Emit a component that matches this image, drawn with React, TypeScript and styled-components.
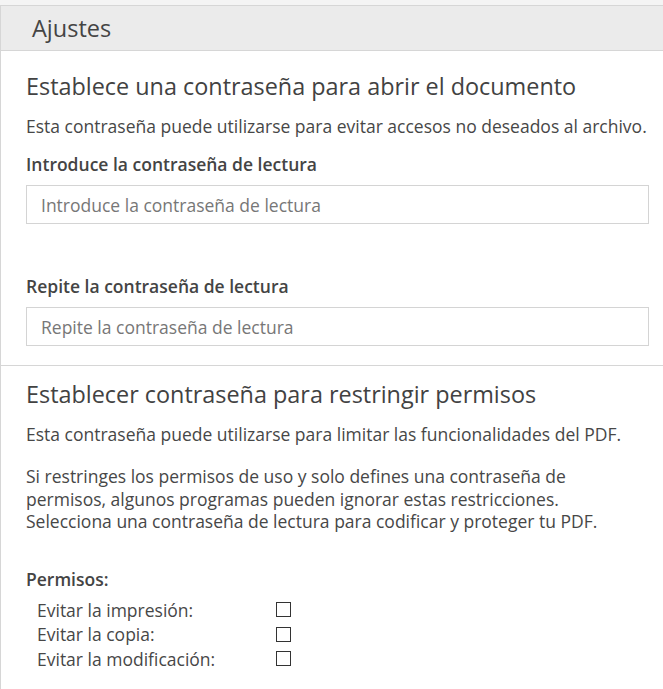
import React from "react";
import styled, { createGlobalStyle } from "styled-components";

const GlobalStyle = createGlobalStyle`
  html, body {
    margin: 0;
    padding: 0;
    background: #f4f4f4;
  }
  body {
    font-family: "Open Sans", "Noto Sans", sans-serif;
    color: #444;
  }
`;

type Permission = {
  label: string
};

const permissions: Permission[] = [
  { label: "Evitar la impresión:" },
  { label: "Evitar la copia:" },
  { label: "Evitar la modificación:" },
];

export default function App() {
  return (
    <>
      <GlobalStyle />
      <Page>
        <Panel>
          <PanelHeader>Ajustes</PanelHeader>

          <Section>
            <SectionTitle>Establece una contraseña para abrir el documento</SectionTitle>
            <Description>
              Esta contraseña puede utilizarse para evitar accesos no deseados al archivo.
            </Description>

            <Field>
              <FieldLabel>Introduce la contraseña de lectura</FieldLabel>
              <TextInput type="password" placeholder="Introduce la contraseña de lectura" />
            </Field>

            <Field spaced>
              <FieldLabel>Repite la contraseña de lectura</FieldLabel>
              <TextInput type="password" placeholder="Repite la contraseña de lectura" />
            </Field>
          </Section>

          <Section divided>
            <SectionTitle>Establecer contraseña para restringir permisos</SectionTitle>
            <Description>
              Esta contraseña puede utilizarse para limitar las funcionalidades del PDF.
            </Description>
            <Paragraph>
              Si restringes los permisos de uso y solo defines una contraseña de
              <br />
              permisos, algunos programas pueden ignorar estas restricciones.
              <br />
              Selecciona una contraseña de lectura para codificar y proteger tu PDF.
            </Paragraph>

            <PermTitle>Permisos:</PermTitle>
            <PermList>
              {permissions.map((p) => (
                <PermRow key={p.label}>
                  <PermLabel>{p.label}</PermLabel>
                  <Check />
                </PermRow>
              ))}
            </PermList>
          </Section>
        </Panel>
      </Page>
    </>
  );
}

const Page = styled.div`
  padding-top: 5px;
  width: 663px;
  height: 689px;
  box-sizing: border-box;
  overflow: hidden;
`;

const Panel = styled.div`
  background: #fff;
  border-left: 1px solid #d6d6d6;
  border-top: 1px solid #d6d6d6;
  width: 700px;
  min-height: 700px;
`;

const PanelHeader = styled.div`
  height: 44px;
  line-height: 44px;
  background: #ebebeb;
  border-bottom: 1px solid #d6d6d6;
  padding-left: 31px;
  font-size: 23.5px;
  color: #444;
`;

const Section = styled.div<{ divided?: boolean }>`
  box-sizing: border-box;
  width: 663px;
  padding: 18px 0 19px 25px;
  ${(props) =>
    props.divided &&
    `
    border-top: 1px solid #d6d6d6;
    padding-top: 11px;
  `}
`;

const SectionTitle = styled.h2`
  margin: 0;
  font-size: 23.4px;
  font-weight: 400;
  line-height: 34px;
  color: #424242;
`;

const Description = styled.p`
  margin: 12px 0 0;
  font-size: 17.5px;
  line-height: 23px;
  color: #474747;
  white-space: nowrap;
`;

const Paragraph = styled.p`
  margin: 19px 0 0;
  font-size: 17.5px;
  line-height: 22.5px;
  color: #474747;
  white-space: nowrap;
`;

const Field = styled.div<{ spaced?: boolean }>`
  margin-top: ${(props) => (props.spaced ? "51px" : "15px")};
  display: flex;
  flex-direction: column;
  gap: 9px;
`;

const FieldLabel = styled.label`
  font-size: 17.5px;
  font-weight: 600;
  line-height: 23px;
  color: #444;
`;

const TextInput = styled.input`
  box-sizing: border-box;
  width: 623px;
  height: 39px;
  border: 1px solid #d4d4d4;
  padding: 0 14px;
  font-family: "Open Sans", "Noto Sans", sans-serif;
  font-size: 17.5px;
  color: #444;
  outline: none;

  &::placeholder {
    color: #777;
  }
`;

const PermTitle = styled.div`
  margin-top: 35px;
  font-size: 17.5px;
  font-weight: 600;
  line-height: 23px;
  color: #444;
`;

const PermList = styled.div`
  margin-top: 7px;
  padding-left: 11px;
  display: flex;
  flex-direction: column;
`;

const PermRow = styled.div`
  display: flex;
  align-items: center;
  height: 24.5px;
`;

const PermLabel = styled.span`
  width: 239px;
  font-size: 17.5px;
  color: #474747;
`;

const Check = styled.span`
  width: 13px;
  height: 13px;
  border: 1px solid #333;
  background: #fff;
`;
